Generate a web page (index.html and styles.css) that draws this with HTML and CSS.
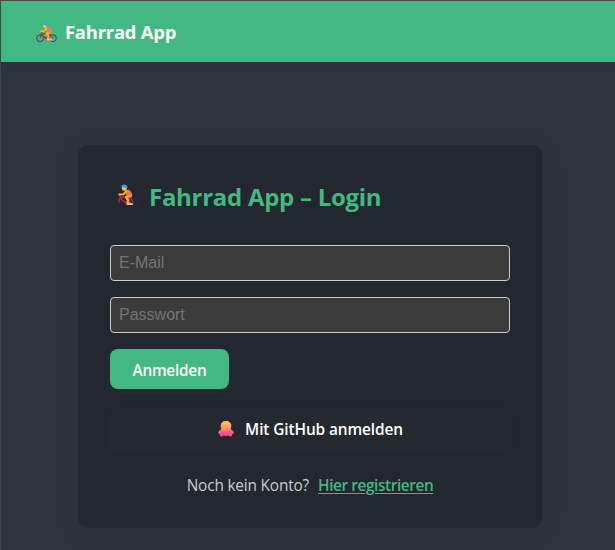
FILE: index.html
```html
<!DOCTYPE html>
<html lang="de">
<head>
<meta charset="utf-8">
<title>Fahrrad App</title>
<link rel="stylesheet" href="styles.css">
</head>
<body>
<svg class="defs" aria-hidden="true">
  <symbol id="rider" viewBox="0 0 24 24">
    <path d="M6.500 11.500l-1.800 7M6 13.500l5.500 5.300 5.200-4.800M6 13.500l8-.8M17 14l2.200 4.500" fill="none" stroke="#b52b4b" stroke-width="1.3"/>
    <path d="M14.500 6.200c2.200.3 3.800 2.600 3.800 6l-1.900 1.800-2.200-1.800z" fill="#b59b98"/>
    <path d="M11.500 6l3.300-.2 1.900 3 .2 3.600-3.600.4-1.800-3z" fill="#f47b35"/>
    <path d="M12 7.300l-2.700 3-4 .3" fill="none" stroke="#ffb52b" stroke-width="2" stroke-linecap="round" stroke-linejoin="round"/>
    <path d="M15.500 12.600l-3.600.4 2.300 3.200-.4 2.800" fill="none" stroke="#fbaa2c" stroke-width="2.400" stroke-linejoin="round"/>
    <path d="M12.500 18.600h4l2.500 1v1.400h-6.500z" fill="#f0ae8a"/>
    <circle cx="10.300" cy="4.300" r="2.500" fill="#ffc13a"/>
    <path d="M7 3.300C7.800-.3 13-.4 13.600 3.700L12.400 5 10.300 3.200z" fill="#3aa0e5"/>
  </symbol>
</svg>
<header class="topbar">
  <svg class="topbar-icon" viewBox="0 0 24 24"><g class="wheels"><circle cx="4.7" cy="18.5" r="3.9"/><circle cx="19.3" cy="18.5" r="3.9"/></g><use href="#rider"/></svg>
  <span class="brand">Fahrrad App</span>
</header>
<main class="card">
  <h1 class="title">
    <svg class="title-icon" viewBox="0 0 24 24"><g class="wheels"><circle cx="4.7" cy="18.5" r="3.9"/><circle cx="19.3" cy="18.5" r="3.9"/></g><use href="#rider"/></svg>
    <span>Fahrrad App – Login</span>
  </h1>
  <form class="form">
    <input class="field" type="email" placeholder="E-Mail">
    <input class="field" type="password" placeholder="Passwort">
    <button class="submit" type="button"><span>Anmelden</span></button>
  </form>
  <button class="github" type="button">
    <svg class="octopus" viewBox="0 0 16 16">
      <defs><linearGradient id="octo" x1="0" y1="0" x2="0" y2="1"><stop offset=".15" stop-color="#ffb856"/><stop offset=".5" stop-color="#ff8b69"/><stop offset=".7" stop-color="#ff5c83"/><stop offset="1" stop-color="#ff3f9f"/></linearGradient></defs>
      <path d="M8 0C4.800 0 2.700 2.100 2.700 4.900c0 1.500.7 2.300.2 3.500C2.200 9.500.4 9.500.1 11.600c-.1 1.200.9 1.600 1.900 1.300-.2 1.600.2 2.700 1.500 2.700 1.500 0 1.700-1.300 2.600-1.300.7 0 .8 1 1.900 1s1.200-1 1.900-1c.9 0 1.100 1.300 2.600 1.300 1.300 0 1.700-1.100 1.500-2.700 1 .3 2-.1 1.900-1.300-.3-2.100-2.100-2.100-2.800-3.200-.5-1.200.2-2 .2-3.500C13.300 2.100 11.200 0 8 0z" fill="url(#octo)"/>
    </svg>
    <span>Mit GitHub anmelden</span>
  </button>
  <p class="signup"><span class="question">Noch kein Konto?</span><a class="link" href="#">Hier registrieren</a></p>
</main>
</body>
</html>
```
FILE: styles.css
```css
* { box-sizing: border-box; }
body {
  margin: 0;
  height: 550px;
  overflow: hidden;
  border-top: 1px solid #4a4a4a;
  border-left: 1px solid #454545;
  background: #2f333d;
  font-family: "Segoe UI", "Open Sans", "Noto Sans", sans-serif;
}
.defs { position: absolute; width: 0; height: 0; }
.wheels { fill: none; stroke: #453b57; stroke-width: 1.1; }
.topbar {
  display: flex;
  align-items: center;
  height: 61px;
  padding: 0 0 0 35px;
  background: #43b883;
  box-shadow: 0 2px 8px rgba(0, 0, 0, .07);
}
.topbar-icon { width: 21px; height: 21px; margin: 2px 8px 0 0; }
.brand { color: #fff; font-size: 18.400px; font-weight: 700; letter-spacing: -.22px; }
.card {
  width: 464px;
  height: 383px;
  margin: 83px 0 0 77px;
  padding: 32px;
  border-radius: 10px;
  background: #23272f;
  box-shadow: 0 4px 24px rgba(0, 0, 0, .1);
}
.title {
  display: flex;
  align-items: center;
  height: 38px;
  margin: 0 0 30px;
  padding-left: 4px;
  color: #43b883;
  font-size: 24px;
  font-weight: 700;
  letter-spacing: -.28px;
}
.title-icon { width: 24px; height: 24px; margin-right: 11px; }
.title .wheels { stroke: #34234b; }
.form { display: flex; flex-direction: column; align-items: flex-start; gap: 16px; }
.field {
  width: 400px;
  height: 36px;
  padding: 0 8px;
  border: 1px solid #ccc;
  border-radius: 4px;
  background: #3b3b3b;
  font: 16px Arial, "Liberation Sans", sans-serif;
}
.field::placeholder { color: #757575; }
.submit, .github { border: 0; color: #fff; font-family: inherit; font-size: 15.400px; font-weight: 600; }
.submit {
  width: 119px;
  height: 40px;
  padding: 3px 0 0;
  border-radius: 8px;
  background: #43b883;
  box-shadow: 0 2px 8px rgba(67, 184, 131, .08);
  letter-spacing: -.25px;
}
.github {
  display: flex;
  align-items: center;
  justify-content: center;
  width: 400px;
  height: 40px;
  margin-top: 20px;
  padding: 0 0 0 1px;
  border-radius: 8px;
  background: #24292f;
  box-shadow: 0 2px 8px rgba(67, 184, 131, .05);
  letter-spacing: -.1px;
}
.octopus { width: 16px; height: 16px; margin-right: 11px; }
.signup {
  display: flex;
  justify-content: center;
  gap: 9px;
  margin: 27px 0 0;
  color: #ccc;
  font-size: 15.400px;
  line-height: 20px;
  letter-spacing: -.18px;
}
.link { color: #43b883; font-weight: 600; letter-spacing: -.42px; text-underline-offset: 2px; text-decoration-thickness: 1px; }
```
